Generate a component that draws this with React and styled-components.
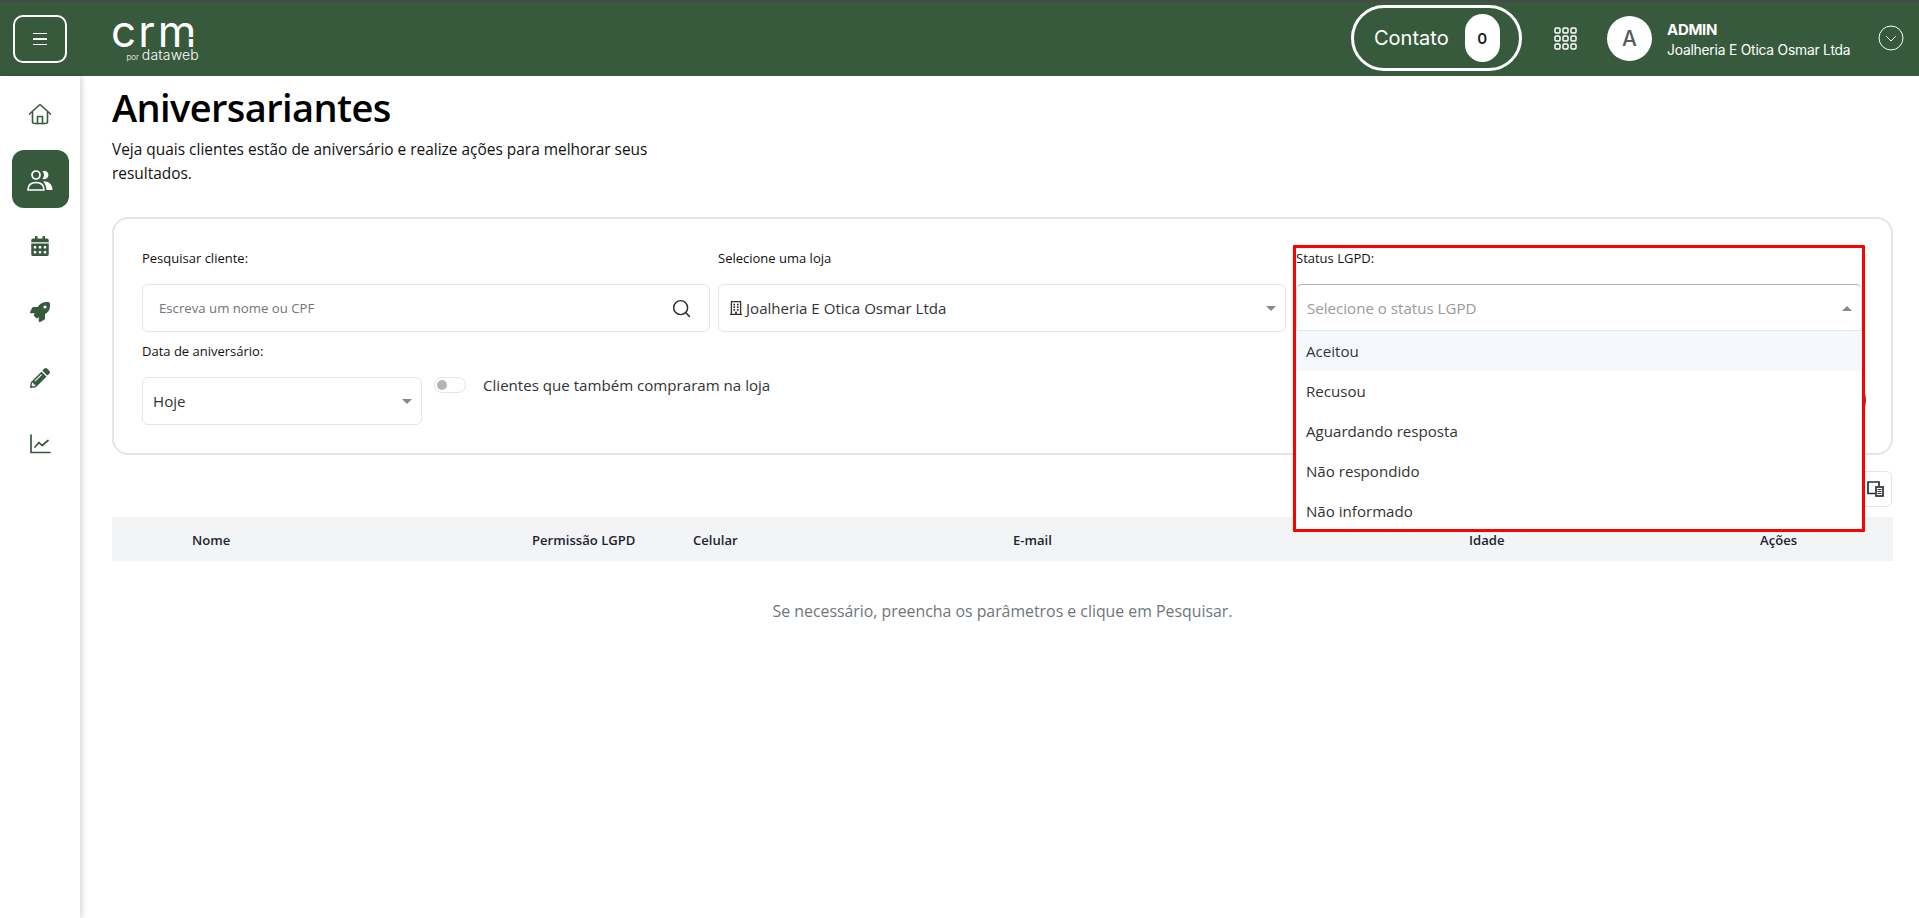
import React from 'react'
import styled, { createGlobalStyle } from 'styled-components'
import { FaCalendarAlt, FaRocket, FaPencilAlt, FaRegBuilding } from 'react-icons/fa'
import { FiSearch } from 'react-icons/fi'

const GREEN = '#375a3d'

const GlobalStyle = createGlobalStyle`
  html, body { margin: 0; padding: 0; background: #fff; overflow: hidden; }
  body { font-family: "Open Sans", "Noto Sans", sans-serif; color: #212529; }
  * { box-sizing: border-box; }
`

const HomeIcon = () => (
  <svg width="24" height="22" viewBox="0 0 24 22" fill="none" stroke={GREEN} strokeWidth="1.6" strokeLinejoin="round" strokeLinecap="round">
    <path d="M1.5 11 12 1.5 22.5 11" />
    <path d="M4.5 9v9.5a2 2 0 0 0 2 2h11a2 2 0 0 0 2-2V9" />
    <path d="M9.5 20.5v-7h5v7" />
  </svg>
)

const UsersIcon = () => (
  <svg width="26" height="21" viewBox="0 0 26 21" fill="none">
    <circle cx="9" cy="5" r="4" stroke="#fff" strokeWidth="1.7" />
    <path d="M15.500 1.200a4.200 4.200 0 1 1 0 7.600 6 6 0 0 0 0-7.600Z" fill="#fff" />
    <path d="M1 20c0-5 3-7.500 8-7.500s8 2.500 8 7.500Z" stroke="#fff" strokeWidth="1.7" strokeLinejoin="round" />
    <path d="M16 11.200c6 0 9.500 3 9.500 8.800H19.500c0-3.500-1.500-6.500-3.500-8.800Z" fill="#fff" />
  </svg>
)

const ChartIcon = () => (
  <svg width="21" height="20" viewBox="0 0 21 20" fill="none" stroke={GREEN} strokeWidth="1.7" strokeLinecap="round" strokeLinejoin="round">
    <path d="M1 1v17.500h19" />
    <path d="M5 13l4-4.500 3 3 6-5" />
  </svg>
)

const GridIcon = () => (
  <svg width="23" height="23" viewBox="0 0 23 23" fill="none" stroke="#fff" strokeWidth="1.500">
    {[0, 8, 16].map(y =>
      [0, 8, 16].map(x => <rect key={`${x}-${y}`} x={x + 1} y={y + 1} width="5" height="5" rx="1.200" />)
    )}
  </svg>
)

const ChevronCircle = () => (
  <svg width="26" height="26" viewBox="0 0 26 26" fill="none" stroke="#fff" strokeWidth="1">
    <circle cx="13" cy="13" r="12" />
    <path d="M8.500 11.500 13 16l4.500-4.500" strokeLinecap="round" />
  </svg>
)

const ColumnsIcon = () => (
  <svg width="17" height="16" viewBox="0 0 17 16" fill="none" stroke="#2b2f36" strokeWidth="1.700">
    <path d="M8 12.500H1V1h11v4" />
    <rect x="9" y="6" width="7" height="9" />
    <path d="M10.500 8.500h4M10.500 10.500h4M10.500 12.500h4" strokeWidth="1.100" />
  </svg>
)

const Page = styled.div`
  display: flex;
  flex-direction: column;
  min-height: 100vh;
`

const TopBar = styled.header`
  height: 76px;
  flex: none;
  display: flex;
  align-items: center;
  background: ${GREEN};
  border-top: 2px solid #474b48;
  padding: 0 15px 2px 13px;
  color: #fff;
  font-family: Inter, "Liberation Sans", sans-serif;
`

const MenuButton = styled.button`
  width: 54px;
  height: 48px;
  margin-top: 2px;
  border: 2px solid #fff;
  border-radius: 10px;
  background: transparent;
  display: flex;
  flex-direction: column;
  align-items: center;
  justify-content: center;
  gap: 4px;
  padding: 0;
  span {
    width: 14px;
    height: 1.500px;
    background: #fff;
  }
`

const Logo = styled.div`
  margin-left: 44px;
  margin-top: 3px;
  width: 88px;
  display: flex;
  flex-direction: column;
  align-items: flex-end;
`

const LogoMark = styled.div`
  position: relative;
  width: 88px;
  height: 30px;
  font-size: 44px;
  font-weight: 400;
  line-height: 30px;
  letter-spacing: 2.200px;
  &::after {
    content: '';
    position: absolute;
    right: 3px;
    top: 21px;
    width: 7px;
    height: 2px;
    background: ${GREEN};
  }
`

const LogoSub = styled.div`
  font-size: 14px;
  font-weight: 300;
  line-height: 12px;
  letter-spacing: 0.2px;
  margin-top: 3px;
  small {
    font-size: 8px;
    margin-right: 3px;
    letter-spacing: 0;
  }
`

const Spacer = styled.div`
  flex: 1;
`

const ContactPill = styled.div`
  width: 171px;
  height: 66px;
  border: 3px solid #fff;
  border-radius: 33px;
  display: flex;
  align-items: center;
  padding-left: 20px;
  font-size: 20px;
`

const ContactCount = styled.span`
  width: 35px;
  height: 48px;
  margin-left: 16px;
  border-radius: 18px;
  background: #fff;
  color: #1b1f24;
  font-size: 15px;
  font-weight: 600;
  display: flex;
  align-items: center;
  justify-content: center;
`

const AppsButton = styled.div`
  margin-left: 32px;
  display: flex;
`

const Avatar = styled.div`
  width: 45px;
  height: 45px;
  margin-left: 30px;
  border-radius: 50%;
  background: #fff;
  color: #595b60;
  font-size: 21px;
  font-weight: 500;
  display: flex;
  align-items: center;
  justify-content: center;
`

const UserInfo = styled.div`
  margin-left: 15px;
  margin-top: 3px;
  width: 211px;
`

const UserName = styled.div`
  font-size: 15px;
  font-weight: 700;
  line-height: 20px;
  letter-spacing: -0.3px;
`

const UserStore = styled.div`
  font-size: 13.800px;
  line-height: 20px;
  letter-spacing: -0.2px;
`

const Body = styled.div`
  flex: 1;
  display: flex;
`

const SideNav = styled.nav`
  width: 80px;
  flex: none;
  background: #fff;
  box-shadow: 2px 0 6px rgba(0, 0, 0, 0.16);
  padding-top: 8px;
  display: flex;
  flex-direction: column;
  align-items: center;
  gap: 8px;
`

const NavItem = styled.a`
  width: 57px;
  height: 58px;
  padding-top: 2px;
  border-radius: 12px;
  display: flex;
  align-items: center;
  justify-content: center;
  color: ${GREEN};
  background: ${p => (p.$active ? GREEN : 'transparent')};
  font-size: 20px;
`

const Main = styled.main`
  flex: 1;
  min-width: 0;
  padding: 9px 26px 0 32px;
`

const Title = styled.h1`
  margin: 0;
  font-size: 38px;
  font-weight: 600;
  line-height: 44px;
  color: #000;
  letter-spacing: -0.6px;
`

const Intro = styled.p`
  margin: 8px 0 0;
  width: 550px;
  font-size: 15.450px;
  line-height: 24px;
  color: #111;
`

const FilterCard = styled.section`
  margin-top: 32px;
  border: 2px solid #e2e5ea;
  border-radius: 16px;
  padding: 29px 29px 28px 28px;
`

const FilterRow = styled.div`
  display: grid;
  grid-template-columns: repeat(3, 1fr);
  column-gap: 8px;
`

const Field = styled.div`
  position: relative;
  min-width: 0;
  margin-left: ${p => p.$shift || 0}px;
`

const Label = styled.label`
  display: block;
  height: 20px;
  margin-bottom: 16px;
  font-size: 13px;
  line-height: 20px;
  color: #111;
`

const SearchBox = styled.div`
  height: 48px;
  border: 1px solid #e2e5ea;
  border-radius: 6px;
  display: flex;
  align-items: center;
  justify-content: space-between;
  padding: 0 17px 0 16px;
  font-size: 13.200px;
  color: #70757c;
  svg {
    color: #2b2f36;
    font-size: 21px;
    stroke-width: 1.700;
  }
`

const SelectBox = styled.div`
  position: relative;
  height: ${p => (p.$open ? 47 : 48)}px;
  width: ${p => p.$width || 'auto'};
  border: 1px solid #e2e5ea;
  border-top-color: ${p => (p.$open ? '#b3b3b3' : '#e2e5ea')};
  border-radius: ${p => (p.$open ? '6px 6px 0 0' : '6px')};
  display: flex;
  align-items: center;
  gap: 3px;
  padding: 0 32px 0 10px;
  font-size: 15.100px;
  color: ${p => (p.$muted ? '#9a9a9a' : '#333')};
  background: #fff;
  z-index: ${p => (p.$open ? 3 : 'auto')};
`

const Caret = styled.span`
  position: absolute;
  right: 9px;
  top: 50%;
  margin-top: -2px;
  border-left: 5px solid transparent;
  border-right: 5px solid transparent;
  border-top: ${p => (p.$up ? 'none' : '5px solid #888')};
  border-bottom: ${p => (p.$up ? '5px solid #888' : 'none')};
`

const OptionList = styled.ul`
  position: absolute;
  left: 0;
  right: 0;
  top: 83px;
  margin: 0;
  padding: 0;
  list-style: none;
  background: #fff;
  z-index: 3;
`

const Option = styled.li`
  height: 40px;
  padding-left: 10px;
  display: flex;
  align-items: center;
  font-size: 15.100px;
  color: #333;
  background: ${p => (p.$hover ? '#f5f9fd' : '#fff')};
`

const Highlight = styled.div`
  position: absolute;
  left: -3px;
  right: -3px;
  top: -3px;
  height: 287px;
  border: 3px solid #f00;
  border-radius: 1px;
  pointer-events: none;
  z-index: 4;
`

const SecondRow = styled.div`
  display: flex;
  align-items: flex-start;
  margin-top: 9px;
`

const Toggle = styled.span`
  width: 32px;
  height: 16px;
  margin: 36px 0 0 12px;
  border: 1px solid #e2e5ea;
  border-radius: 8px;
  display: flex;
  align-items: center;
  padding-left: 2px;
  &::before {
    content: '';
    width: 10px;
    height: 10px;
    border-radius: 50%;
    background: #b5b5b5;
  }
`

const ToggleText = styled.span`
  margin: 32px 0 0 17px;
  font-size: 15.100px;
  line-height: 24px;
  color: #333;
`

const SearchButton = styled.button`
  margin: 35px -4px 0 auto;
  width: 130px;
  height: 48px;
  border: 0;
  border-radius: 24px;
  background: ${GREEN};
  color: #fff;
  font-size: 14px;
`

const Toolbar = styled.div`
  display: flex;
  justify-content: flex-end;
  margin-top: 16px;
`

const ToolButton = styled.button`
  width: 40px;
  height: 36px;
  margin-right: 1px;
  border: 1px solid #e2e5ea;
  border-radius: 6px;
  background: #fff;
  padding: 0 0 0 6px;
  display: flex;
  align-items: center;
  justify-content: center;
`

const TableHead = styled.div`
  margin-top: 10px;
  height: 44px;
  padding: 1px 0 0 80px;
  background: #f3f4f6;
  display: grid;
  grid-template-columns: 340px 161px 320px 456px 291px 1fr;
  align-items: center;
  font-size: 13.100px;
  font-weight: 600;
  color: #1c2430;
`

const EmptyText = styled.p`
  margin: 38px 0 0;
  text-align: center;
  font-size: 15.850px;
  line-height: 24px;
  color: #70757c;
`

const options = ['Aceitou', 'Recusou', 'Aguardando resposta', 'Não respondido', 'Não informado']
const columns = ['Nome', 'Permissão LGPD', 'Celular', 'E-mail', 'Idade', 'Ações']

export default function App() {
  return (
    <Page>
      <GlobalStyle />
      <TopBar>
        <MenuButton aria-label="Menu">
          <span />
          <span />
          <span />
        </MenuButton>
        <Logo>
          <LogoMark>crm</LogoMark>
          <LogoSub>
            <small>por</small>dataweb
          </LogoSub>
        </Logo>
        <Spacer />
        <ContactPill>
          Contato
          <ContactCount>0</ContactCount>
        </ContactPill>
        <AppsButton>
          <GridIcon />
        </AppsButton>
        <Avatar>A</Avatar>
        <UserInfo>
          <UserName>ADMIN</UserName>
          <UserStore>Joalheria E Otica Osmar Ltda</UserStore>
        </UserInfo>
        <ChevronCircle />
      </TopBar>
      <Body>
        <SideNav>
          <NavItem><HomeIcon /></NavItem>
          <NavItem $active><UsersIcon /></NavItem>
          <NavItem><FaCalendarAlt /></NavItem>
          <NavItem><FaRocket /></NavItem>
          <NavItem><FaPencilAlt /></NavItem>
          <NavItem><ChartIcon /></NavItem>
        </SideNav>
        <Main>
          <Title>Aniversariantes</Title>
          <Intro>Veja quais clientes estão de aniversário e realize ações para melhorar seus resultados.</Intro>
          <FilterCard>
            <FilterRow>
              <Field>
                <Label>Pesquisar cliente:</Label>
                <SearchBox>
                  Escreva um nome ou CPF
                  <FiSearch />
                </SearchBox>
              </Field>
              <Field>
                <Label>Selecione uma loja</Label>
                <SelectBox>
                  <FaRegBuilding size={14} color="#333" />
                  Joalheria E Otica Osmar Ltda
                  <Caret />
                </SelectBox>
              </Field>
              <Field $shift={2}>
                <Label>Status LGPD:</Label>
                <SelectBox $open $muted>
                  Selecione o status LGPD
                  <Caret $up />
                </SelectBox>
                <OptionList>
                  {options.map((option, index) => (
                    <Option key={option} $hover={index === 0}>{option}</Option>
                  ))}
                </OptionList>
                <Highlight />
              </Field>
            </FilterRow>
            <SecondRow>
              <Field>
                <Label>Data de aniversário:</Label>
                <SelectBox $width="280px">
                  Hoje
                  <Caret />
                </SelectBox>
              </Field>
              <Toggle />
              <ToggleText>Clientes que também compraram na loja</ToggleText>
              <SearchButton>Pesquisar</SearchButton>
            </SecondRow>
          </FilterCard>
          <Toolbar>
            <ToolButton aria-label="Colunas"><ColumnsIcon /></ToolButton>
          </Toolbar>
          <TableHead>
            {columns.map(column => (
              <span key={column}>{column}</span>
            ))}
          </TableHead>
          <EmptyText>Se necessário, preencha os parâmetros e clique em Pesquisar.</EmptyText>
        </Main>
      </Body>
    </Page>
  )
}
